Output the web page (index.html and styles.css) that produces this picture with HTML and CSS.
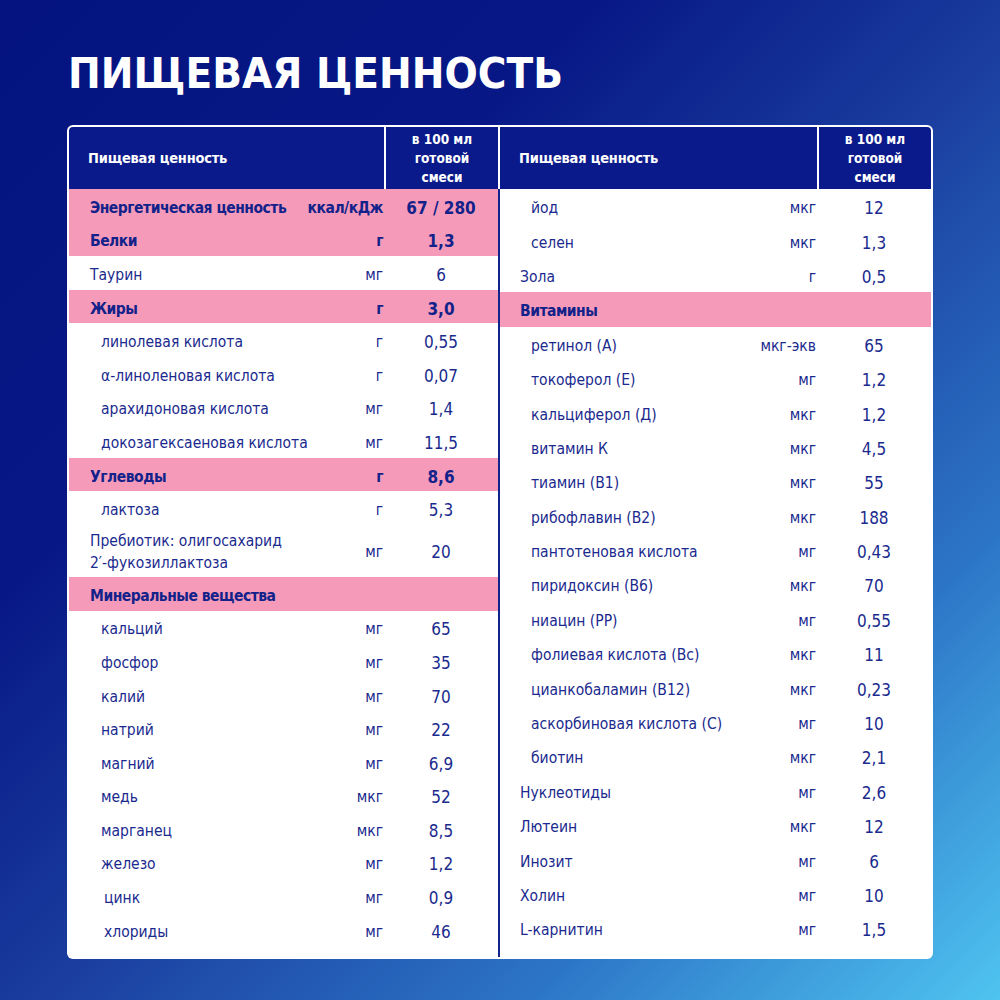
FILE: index.html
```html
<!DOCTYPE html>
<html lang="ru">
<head>
<meta charset="utf-8">
<title>Пищевая ценность</title>
<link rel="stylesheet" href="styles.css">
</head>
<body>
<div class="page">
  <h1 class="title">ПИЩЕВАЯ ЦЕННОСТЬ</h1>
  <div class="card">
    <div class="panel left">
      <div class="head">
        <div class="hname">Пищевая ценность</div>
        <div class="hval">в 100 мл<br>готовой<br>смеси</div>
      </div>
      <div class="rows">
        <div class="row pink"><span class="name">Энергетическая ценность</span><span class="unit">ккал/кДж</span><span class="val">67 / 280</span></div>
        <div class="row pink"><span class="name">Белки</span><span class="unit">г</span><span class="val">1,3</span></div>
        <div class="row"><span class="name">Таурин</span><span class="unit">мг</span><span class="val">6</span></div>
        <div class="row pink"><span class="name">Жиры</span><span class="unit">г</span><span class="val">3,0</span></div>
        <div class="row sub"><span class="name">линолевая кислота</span><span class="unit">г</span><span class="val">0,55</span></div>
        <div class="row sub"><span class="name">α-линоленовая кислота</span><span class="unit">г</span><span class="val">0,07</span></div>
        <div class="row sub"><span class="name">арахидоновая кислота</span><span class="unit">мг</span><span class="val">1,4</span></div>
        <div class="row sub"><span class="name">докозагексаеновая кислота</span><span class="unit">мг</span><span class="val">11,5</span></div>
        <div class="row pink"><span class="name">Углеводы</span><span class="unit">г</span><span class="val">8,6</span></div>
        <div class="row sub"><span class="name">лактоза</span><span class="unit">г</span><span class="val">5,3</span></div>
        <div class="row tall"><span class="name">Пребиотик: олигосахарид<br>2′-фукозиллактоза</span><span class="unit">мг</span><span class="val">20</span></div>
        <div class="row pink"><span class="name">Минеральные вещества</span><span class="unit"></span><span class="val"></span></div>
        <div class="row sub"><span class="name">кальций</span><span class="unit">мг</span><span class="val">65</span></div>
        <div class="row sub"><span class="name">фосфор</span><span class="unit">мг</span><span class="val">35</span></div>
        <div class="row sub"><span class="name">калий</span><span class="unit">мг</span><span class="val">70</span></div>
        <div class="row sub"><span class="name">натрий</span><span class="unit">мг</span><span class="val">22</span></div>
        <div class="row sub"><span class="name">магний</span><span class="unit">мг</span><span class="val">6,9</span></div>
        <div class="row sub"><span class="name">медь</span><span class="unit">мкг</span><span class="val">52</span></div>
        <div class="row sub"><span class="name">марганец</span><span class="unit">мкг</span><span class="val">8,5</span></div>
        <div class="row sub"><span class="name">железо</span><span class="unit">мг</span><span class="val">1,2</span></div>
        <div class="row sub2"><span class="name">цинк</span><span class="unit">мг</span><span class="val">0,9</span></div>
        <div class="row sub2"><span class="name">хлориды</span><span class="unit">мг</span><span class="val">46</span></div>
      </div>
    </div>
    <div class="panel right">
      <div class="head">
        <div class="hname">Пищевая ценность</div>
        <div class="hval">в 100 мл<br>готовой<br>смеси</div>
      </div>
      <div class="rows">
        <div class="row sub"><span class="name">йод</span><span class="unit">мкг</span><span class="val">12</span></div>
        <div class="row sub"><span class="name">селен</span><span class="unit">мкг</span><span class="val">1,3</span></div>
        <div class="row"><span class="name">Зола</span><span class="unit">г</span><span class="val">0,5</span></div>
        <div class="row pink"><span class="name">Витамины</span><span class="unit"></span><span class="val"></span></div>
        <div class="row sub"><span class="name">ретинол (А)</span><span class="unit">мкг-экв</span><span class="val">65</span></div>
        <div class="row sub"><span class="name">токоферол (Е)</span><span class="unit">мг</span><span class="val">1,2</span></div>
        <div class="row sub"><span class="name">кальциферол (Д)</span><span class="unit">мкг</span><span class="val">1,2</span></div>
        <div class="row sub"><span class="name">витамин К</span><span class="unit">мкг</span><span class="val">4,5</span></div>
        <div class="row sub"><span class="name">тиамин (В1)</span><span class="unit">мкг</span><span class="val">55</span></div>
        <div class="row sub"><span class="name">рибофлавин (В2)</span><span class="unit">мкг</span><span class="val">188</span></div>
        <div class="row sub"><span class="name">пантотеновая кислота</span><span class="unit">мг</span><span class="val">0,43</span></div>
        <div class="row sub"><span class="name">пиридоксин (В6)</span><span class="unit">мкг</span><span class="val">70</span></div>
        <div class="row sub"><span class="name">ниацин (РР)</span><span class="unit">мг</span><span class="val">0,55</span></div>
        <div class="row sub"><span class="name">фолиевая кислота (Вс)</span><span class="unit">мкг</span><span class="val">11</span></div>
        <div class="row sub"><span class="name">цианкобаламин (В12)</span><span class="unit">мкг</span><span class="val">0,23</span></div>
        <div class="row sub"><span class="name">аскорбиновая кислота (С)</span><span class="unit">мг</span><span class="val">10</span></div>
        <div class="row sub"><span class="name">биотин</span><span class="unit">мкг</span><span class="val">2,1</span></div>
        <div class="row"><span class="name">Нуклеотиды</span><span class="unit">мг</span><span class="val">2,6</span></div>
        <div class="row"><span class="name">Лютеин</span><span class="unit">мкг</span><span class="val">12</span></div>
        <div class="row"><span class="name">Инозит</span><span class="unit">мг</span><span class="val">6</span></div>
        <div class="row"><span class="name">Холин</span><span class="unit">мг</span><span class="val">10</span></div>
        <div class="row"><span class="name">L-карнитин</span><span class="unit">мг</span><span class="val">1,5</span></div>
      </div>
    </div>
  </div>
</div>
</body>
</html>
```

FILE: styles.css
```css
html, body {
  margin: 0;
  padding: 0;
}
body {
  width: 1000px;
  height: 1000px;
  overflow: hidden;
  font-family: "DejaVu Sans Condensed", "DejaVu Sans", sans-serif;
  color: #1a2a8e;
  background: linear-gradient(135deg, #04137f 0%, #071886 30%, #1a3d9f 52%, #2c74c6 76%, #4fc4f0 100%);
}
.page {
  padding: 51px 0 0 67px;
}
.title {
  margin: 0 0 30px 1px;
  font-weight: 700;
  font-size: 43.5px;
  line-height: 44px;
  height: 44px;
  color: #ffffff;
  letter-spacing: 0;
}
.card {
  width: 862px;
  padding: 2px;
  background: #ffffff;
  border-radius: 6px;
  display: grid;
  grid-template-columns: 431px 431px;
}
.head {
  height: 62px;
  display: grid;
  grid-template-columns: 1fr 112px;
  gap: 2px;
  background: #ffffff;
  color: #ffffff;
  font-weight: 700;
}
.left .head {
  margin-right: 2px;
}
.hname, .hval {
  background: #0b1a8a;
  display: flex;
  align-items: center;
}
.left .hname { border-top-left-radius: 4px; }
.right .hval { border-top-right-radius: 4px; }
.hname {
  padding-left: 19px;
  font-size: 14.5px;
  letter-spacing: -0.2px;
}
.hval {
  justify-content: center;
  text-align: center;
  font-size: 13.5px;
  line-height: 19px;
  padding-top: 1px;
}
.rows {
  padding-bottom: 11px;
}
.left .rows {
  border-right: 2px solid #13238c;
}
.row {
  box-sizing: border-box;
  display: grid;
  grid-template-columns: 1fr auto 114px;
  align-items: center;
  height: 33.6px;
  padding-top: 4px;
  font-size: 15.5px;
}
.right .row {
  height: 34.4px;
}
.row .name {
  padding-left: 21px;
  white-space: nowrap;
}
.right .row .name {
  padding-left: 20px;
}
.row.sub .name {
  padding-left: 32px;
}
.right .row.sub .name {
  padding-left: 31px;
}
.row.sub2 .name {
  padding-left: 35px;
}
.row .unit {
  text-align: right;
  padding-right: 1px;
  white-space: nowrap;
}
.row .val {
  text-align: center;
  font-size: 17px;
}
.row.pink {
  background: #f59bb9;
  font-weight: 700;
  color: #13228a;
  letter-spacing: -0.5px;
}
.row.pink .val {
  letter-spacing: 0;
}
.row.tall {
  height: 52px;
  line-height: 22px;
  padding-top: 2px;
}
```
